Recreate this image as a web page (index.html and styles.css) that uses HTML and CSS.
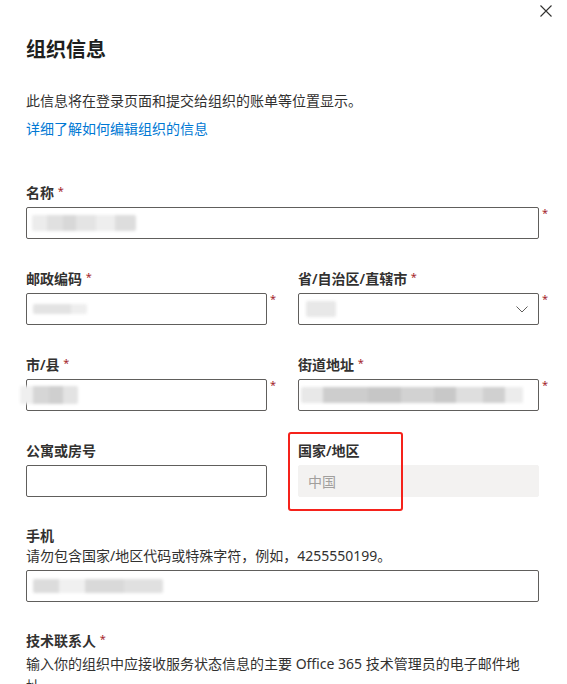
FILE: index.html
```html
<!DOCTYPE html>
<html lang="zh-CN">
<head>
<meta charset="utf-8">
<title>组织信息</title>
<link rel="stylesheet" href="styles.css">
</head>
<body>
<div class="panel">
  <div class="topbar">
    <svg class="close" width="12" height="12" viewBox="0 0 12 12"><path d="M0.5 0.5 L11.5 11.5 M11.5 0.5 L0.5 11.5" stroke="#323130" stroke-width="1.1" fill="none"/></svg>
  </div>
  <div class="content">
    <h1 class="title">组织信息</h1>
    <p class="desc">此信息将在登录页面和提交给组织的账单等位置显示。</p>
    <a class="link" href="#">详细了解如何编辑组织的信息</a>

    <div class="field first">
      <div class="label">名称 <span class="req">*</span></div>
      <div class="input req-after"><span class="blur b-name"></span></div>
    </div>

    <div class="row">
      <div class="field">
        <div class="label">邮政编码 <span class="req">*</span></div>
        <div class="input req-after"><span class="blur b-zip"></span></div>
      </div>
      <div class="field">
        <div class="label">省/自治区/直辖市 <span class="req">*</span></div>
        <div class="input select req-after"><span class="blur b-prov"></span>
          <svg class="chev" width="12" height="7" viewBox="0 0 12 7"><path d="M0.5 0.5 L6 6 L11.5 0.5" stroke="#605e5c" stroke-width="1" fill="none"/></svg>
        </div>
      </div>
    </div>

    <div class="row">
      <div class="field">
        <div class="label">市/县 <span class="req">*</span></div>
        <div class="input req-after"><span class="blur b-city"></span></div>
      </div>
      <div class="field">
        <div class="label">街道地址 <span class="req">*</span></div>
        <div class="input req-after"><span class="blur b-street"></span></div>
      </div>
    </div>

    <div class="row">
      <div class="field">
        <div class="label">公寓或房号</div>
        <div class="input"></div>
      </div>
      <div class="field country">
        <div class="label">国家/地区</div>
        <div class="input disabled">中国</div>
        <div class="highlight"></div>
      </div>
    </div>

    <div class="field phone">
      <div class="label">手机</div>
      <div class="hint">请勿包含国家/地区代码或特殊字符，例如，4255550199。</div>
      <div class="input"><span class="blur b-phone"></span></div>
    </div>

    <div class="field tech">
      <div class="label">技术联系人 <span class="req">*</span></div>
      <div class="hint wrap">输入你的组织中应接收服务状态信息的主要 Office 365 技术管理员的电子邮件地址。</div>
    </div>
  </div>
</div>
</body>
</html>
```

FILE: styles.css
```css
html, body {
  margin: 0;
  padding: 0;
  background: #ffffff;
}
body {
  width: 567px;
  height: 684px;
  overflow: hidden;
  font-family: "Noto Sans", "Noto Sans CJK SC", sans-serif;
  font-size: 14px;
  color: #323130;
}
.topbar {
  display: flex;
  justify-content: flex-end;
  padding: 5px 15px 0 0;
  height: 11px;
}
.close {
  display: block;
}
.content {
  padding-left: 26px;
  width: 513px;
}
.title {
  margin: 20px 0 0 0;
  font-size: 20px;
  line-height: 28px;
  height: 28px;
  font-weight: 700;
  color: #201f1e;
}
.desc {
  margin: 27px 0 0 0;
  line-height: 20px;
  height: 20px;
  color: #323130;
}
.link {
  display: block;
  margin-top: 8px;
  line-height: 20px;
  height: 20px;
  color: #0078d4;
  text-decoration: none;
}
.field {
  position: relative;
  margin-top: 30px;
}
.field.first {
  margin-top: 44px;
}
.row .field {
  margin-top: 0;
}
.row {
  display: grid;
  grid-template-columns: 241px 241px;
  column-gap: 31px;
  margin-top: 30px;
}
.label {
  font-weight: 600;
  line-height: 20px;
  height: 20px;
  margin-bottom: 4px;
  color: #323130;
}
.req {
  color: #a4262c;
  font-size: 11px;
  font-weight: 400;
  line-height: 1;
  vertical-align: 3px;
}
.input {
  position: relative;
  box-sizing: border-box;
  height: 32px;
  border: 1px solid #605e5c;
  border-radius: 2px;
  display: flex;
  align-items: center;
  padding: 0 9px;
}
.req-after::after {
  content: "*";
  position: absolute;
  left: calc(100% + 4px);
  top: -3px;
  color: #a4262c;
  font-size: 11px;
  line-height: 16px;
}
.select {
  justify-content: space-between;
}
.chev {
  display: block;
  margin-right: 1px;
}
.disabled {
  background: #f3f2f1;
  border-color: #f3f2f1;
  color: #a19f9d;
}
.highlight {
  position: absolute;
  left: -10px;
  top: -9px;
  width: 115px;
  height: 79px;
  box-sizing: border-box;
  border: 2px solid #f5221b;
  border-radius: 3px;
  pointer-events: none;
}
.hint {
  line-height: 20px;
  height: 20px;
  margin-bottom: 4px;
  font-weight: 400;
}
.phone {
  margin-top: 29px;
}
.tech {
  margin-top: 29px;
}
.label + .hint {
  margin-top: -4px;
}
.wrap {
  width: 500px;
  height: auto;
  margin-top: -2px !important;
  line-height: 22px;
}
.blur {
  display: block;
  height: 14px;
  filter: blur(1.5px);
  border-radius: 2px;
}
.b-name {
  width: 104px;
  height: 16px;
  margin-left: -4px;
  background: linear-gradient(90deg, #ececec 0 14%, #e0e0e0 14% 30%, #d8d8d8 30% 42%, #e4e4e4 42% 62%, #eeeeee 62% 80%, #dddddd 80% 100%);
}
.b-zip {
  width: 54px;
  height: 10px;
  margin-left: -3px;
  background: linear-gradient(90deg, #e3e3e3 0 70%, #eeeeee 70% 100%);
}
.b-prov {
  width: 30px;
  height: 16px;
  margin-left: -2px;
  background: #e8e8e8;
}
.b-city {
  width: 58px;
  height: 18px;
  margin-left: -16px;
  background: linear-gradient(90deg, #efefef 0 22%, #d6d6d6 22% 50%, #cfcfcf 50% 75%, #e3e3e3 75% 100%);
}
.b-street {
  width: 222px;
  height: 16px;
  margin-left: -7px;
  background: linear-gradient(90deg, #e8e8e8 0 10%, #cdcdcd 10% 30%, #c6c6c6 30% 45%, #d2d2d2 45% 60%, #c8c8c8 60% 70%, #dedede 70% 82%, #d0d0d0 82% 92%, #ececec 92% 100%);
}
.b-phone {
  width: 130px;
  height: 14px;
  margin-left: -3px;
  background: linear-gradient(90deg, #dcdcdc 0 20%, #f0f0f0 20% 40%, #d9d9d9 40% 70%, #e0e0e0 70% 100%);
}
```
